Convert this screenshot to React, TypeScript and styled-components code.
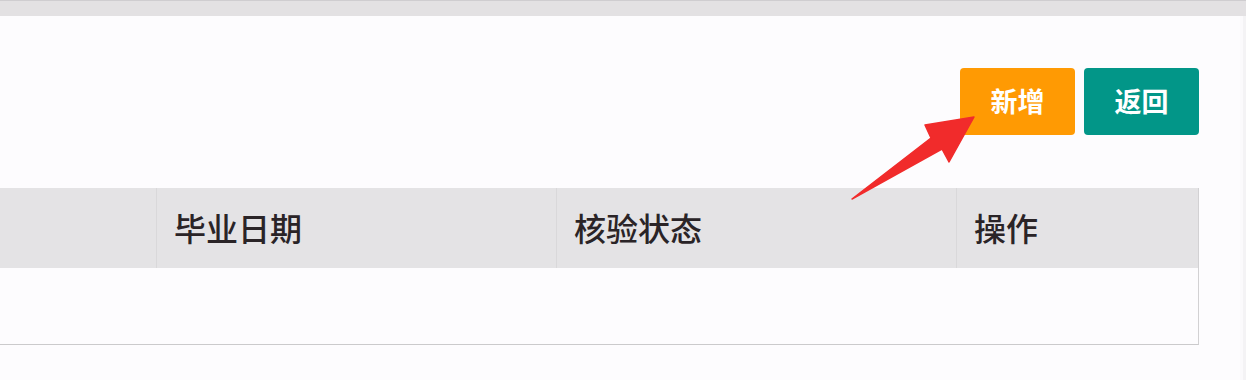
import React from "react";
import styled, { createGlobalStyle } from "styled-components";

const Global = createGlobalStyle`
  html, body { margin: 0; padding: 0; }
  body {
    width: 1246px;
    height: 380px;
    overflow: hidden;
    background: #e3e1e3;
    font-family: "Noto Sans CJK SC", "Noto Sans", sans-serif;
  }
`;

const Page = styled.div`
  position: relative;
  width: 1246px;
  height: 380px;
  display: flex;
  flex-direction: column;
  border-top: 1px solid #cfcdd0;
  box-sizing: border-box;
  overflow: hidden;
`;

const TopBand = styled.div`
  height: 15px;
  flex: none;
`;

const Body = styled.div`
  flex: 1;
  display: flex;
`;

const Card = styled.div`
  width: 1240px;
  background: #fdfcfe;
  padding: 52px 41px 0 0;
  box-sizing: border-box;
  display: flex;
  flex-direction: column;
`;

const SideStrip = styled.div`
  flex: 1;
  background: #f4f3f5;
  border-left: 3px solid #fbfafc;
  box-sizing: border-box;
`;

const Toolbar = styled.div`
  display: flex;
  justify-content: flex-end;
  gap: 9px;
`;

const Button = styled.button<{ $bg: string }>`
  width: 115px;
  height: 67px;
  border: none;
  border-radius: 4px;
  background: ${(p) => p.$bg};
  color: #ffffff;
  font-family: "Noto Sans CJK SC", sans-serif;
  font-weight: 700;
  font-size: 27px;
  padding: 0 0 2px;
  display: flex;
  align-items: center;
  justify-content: center;
`;

const Table = styled.div`
  margin-top: 53px;
  margin-left: -243px;
  width: calc(100% + 243px);
  border-right: 1px solid #d2d1d3;
  border-bottom: 1px solid #cbcacc;
  box-sizing: border-box;
`;

const Row = styled.div`
  display: grid;
  grid-template-columns: 400px 400px 400px 1fr;
`;

const HeadCell = styled.div<{ $last?: boolean }>`
  height: 80px;
  background: #e4e3e5;
  border-right: ${(p) => (p.$last ? "none" : "1px solid #d9d8da")};
  display: flex;
  align-items: center;
  padding-left: 17px;
  padding-bottom: 2px;
  box-sizing: border-box;
  font-size: 32px;
  font-weight: 500;
  color: #2a2427;
  white-space: nowrap;
`;

const BodyCell = styled.div`
  height: 76px;
  background: #fdfcfe;
`;

const Arrow = styled.svg`
  position: absolute;
  left: 0;
  top: 0;
  pointer-events: none;
`;

export default function App() {
  const heads = ["", "毕业日期", "核验状态", "操作"];
  return (
    <>
      <Global />
      <Page>
        <TopBand />
        <Body>
          <Card>
            <Toolbar>
              <Button $bg="#ff9a03">新增</Button>
              <Button $bg="#029688">返回</Button>
            </Toolbar>
            <Table>
              <Row>
                {heads.map((h, i) => (
                  <HeadCell key={i} $last={i === heads.length - 1}>
                    {h}
                  </HeadCell>
                ))}
              </Row>
              <Row>
                {heads.map((_, i) => (
                  <BodyCell key={i} />
                ))}
              </Row>
            </Table>
          </Card>
          <SideStrip />
        </Body>
        <Arrow width="1246" height="380" viewBox="0 0 1246 380">
          <polygon
            points="852,198 931,137 925,124 974,116 949,161 942,148"
            fill="#f12b2b"
            stroke="#f12b2b"
            strokeWidth="1.5"
            strokeLinejoin="round"
          />
        </Arrow>
      </Page>
    </>
  );
}
